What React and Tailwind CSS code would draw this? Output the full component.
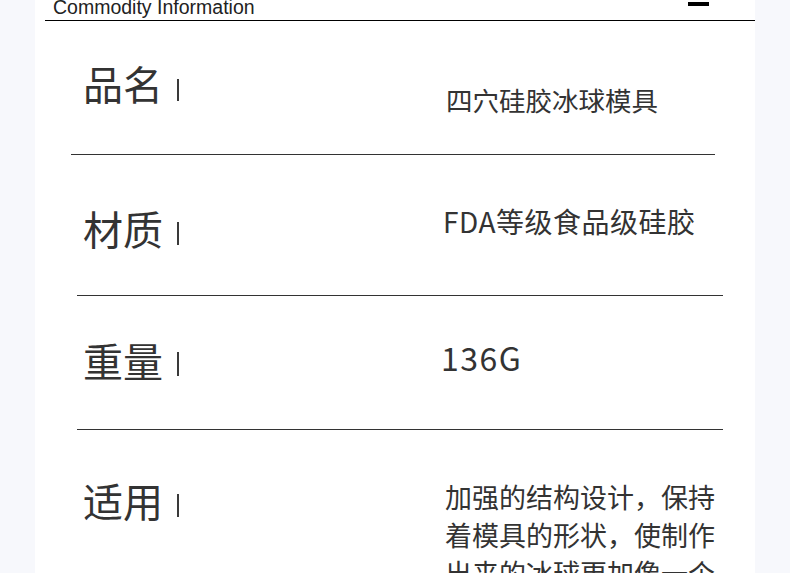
import React from "react";

const cjk = { fontFamily: '"Noto Sans CJK SC", "Noto Sans", sans-serif' };

function Bar({ mt, h }) {
  return <div className="w-[2px] shrink-0 bg-[#3a3a3a]" style={{ marginTop: mt, height: h }} />;
}

export default function App() {
  return (
    <div className="w-[790px] h-[573px] overflow-hidden bg-[#f7f8fc]" style={cjk}>
      <div className="ml-[35px] w-[720px] h-full bg-white text-[#333]">
        {/* header */}
        <div className="ml-[10px] h-[21px] border-b border-black flex items-start">
          <div
            className="pl-[8px] mt-[-4px] text-[19.5px] leading-[22px] text-[#222]"
            style={{ fontFamily: '"Liberation Sans", Arial, sans-serif' }}
          >
            Commodity Information
          </div>
          <div className="ml-auto mr-[46px] mt-[2px] w-[21px] h-[4px] bg-black" />
        </div>

        {/* row 1 */}
        <div className="h-[133px] flex items-start pl-[48px]">
          <div className="w-[94px] mt-[42px] text-[40px] leading-none">品名</div>
          <Bar mt={58} h={22} />
          <div className="ml-[267px] mt-[66px] text-[26.5px] leading-none">四穴硅胶冰球模具</div>
        </div>
        <div className="ml-[36px] w-[644px] h-px bg-[#333]" />

        {/* row 2 */}
        <div className="h-[140px] flex items-start pl-[48px]">
          <div className="w-[94px] mt-[53px] text-[40px] leading-none">材质</div>
          <Bar mt={67} h={23} />
          <div className="ml-[264px] mt-[52px] text-[28px] leading-none tracking-[0.5px]">FDA等级食品级硅胶</div>
        </div>
        <div className="ml-[42px] w-[646px] h-px bg-[#333]" />

        {/* row 3 */}
        <div className="h-[133px] flex items-start pl-[48px]">
          <div className="w-[94px] mt-[44px] text-[40px] leading-none">重量</div>
          <Bar mt={56} h={24} />
          <div className="ml-[262px] mt-[45px] text-[32px] leading-none tracking-[1.5px]">136G</div>
        </div>
        <div className="ml-[42px] w-[646px] h-px bg-[#333]" />

        {/* row 4 */}
        <div className="flex items-start pl-[48px]">
          <div className="w-[94px] mt-[50px] text-[40px] leading-none">适用</div>
          <Bar mt={64} h={23} />
          <div className="ml-[266px] mt-[48px] w-[272px] text-[27px] leading-[38px]">
            加强的结构设计，保持着模具的形状，使制作出来的冰球更加像一个完美的球体
          </div>
        </div>
      </div>
    </div>
  );
}
